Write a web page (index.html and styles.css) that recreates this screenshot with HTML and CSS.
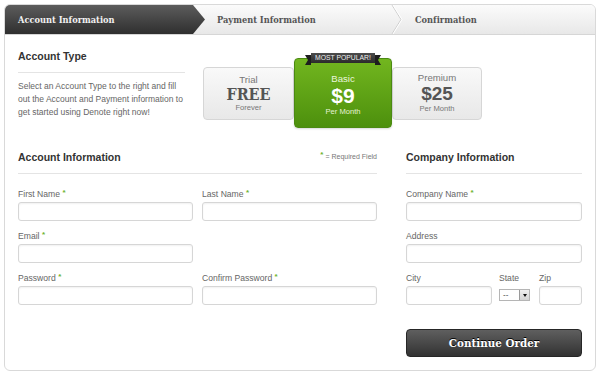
FILE: index.html
```html
<!DOCTYPE html>
<html lang="en">
<head>
    <meta charset="UTF-8">
    <meta name="viewport" content="width=device-width, initial-scale=1.0">
    <title>Sign Up</title>
    <link rel="stylesheet" href="styles.css">
</head>
<body>
    <div class="signup">
        <div class="steps">
            <div class="step active">Account Information</div>
            <div class="step step-payment">Payment Information</div>
            <svg class="step-sep" width="12" height="29" viewBox="0 0 12 29">
                <polyline points="1,0 10,14.5 1,29" fill="none" stroke="#cdcdcd" stroke-width="1"/>
                <polyline points="2,0 11,14.5 2,29" fill="none" stroke="#ffffff" stroke-width="1"/>
            </svg>
            <div class="step">Confirmation</div>
        </div>

        <div class="signup-body">
            <div class="account-type">
                <div class="account-type-info">
                    <h2 class="section-title">Account Type</h2>
                    <p>Select an Account Type to the right and fill out the Account and Payment information to get started using Denote right now!</p>
                </div>
                <div class="plans">
                    <div class="plan plan-trial">
                        <span class="plan-name">Trial</span>
                        <span class="plan-price slab">FREE</span>
                        <span class="plan-term">Forever</span>
                    </div>
                    <div class="plan plan-basic">
                        <span class="ribbon">MOST POPULAR!</span>
                        <span class="plan-name">Basic</span>
                        <span class="plan-price">$9</span>
                        <span class="plan-term">Per Month</span>
                    </div>
                    <div class="plan plan-premium">
                        <span class="plan-name">Premium</span>
                        <span class="plan-price">$25</span>
                        <span class="plan-term">Per Month</span>
                    </div>
                </div>
            </div>

            <div class="forms">
                <div class="form-account">
                    <div class="section-title section-head">
                        <h2>Account Information</h2>
                        <span class="required-note"><span class="req">*</span> = Required Field</span>
                    </div>
                    <div class="fields">
                        <div class="field-row">
                            <div class="field">
                                <label>First Name <span class="req">*</span></label>
                                <input type="text">
                            </div>
                            <div class="field">
                                <label>Last Name <span class="req">*</span></label>
                                <input type="text">
                            </div>
                        </div>
                        <div class="field-row">
                            <div class="field">
                                <label>Email <span class="req">*</span></label>
                                <input type="text">
                            </div>
                            <div class="field"></div>
                        </div>
                        <div class="field-row">
                            <div class="field">
                                <label>Password <span class="req">*</span></label>
                                <input type="password">
                            </div>
                            <div class="field">
                                <label>Confirm Password <span class="req">*</span></label>
                                <input type="password">
                            </div>
                        </div>
                    </div>
                </div>

                <div class="form-company">
                    <div class="section-title section-head">
                        <h2>Company Information</h2>
                    </div>
                    <div class="fields">
                        <div class="field">
                            <label>Company Name <span class="req">*</span></label>
                            <input type="text">
                        </div>
                        <div class="field">
                            <label>Address</label>
                            <input type="text">
                        </div>
                        <div class="field-row address-row">
                            <div class="field field-city">
                                <label>City</label>
                                <input type="text">
                            </div>
                            <div class="field field-state">
                                <label>State</label>
                                <div class="select">
                                    <span class="select-value">--</span>
                                    <span class="select-arrow"></span>
                                </div>
                            </div>
                            <div class="field field-zip">
                                <label>Zip</label>
                                <input type="text">
                            </div>
                        </div>
                    </div>
                    <button class="continue">Continue Order</button>
                </div>
            </div>
        </div>
    </div>
</body>
</html>
```

FILE: styles.css
```css
body {
    margin: 4px;
    font-family: "Liberation Sans", Arial, sans-serif;
    font-variant-ligatures: none;
    background-color: #fff;
    color: #666;
}

.slab, .step, .continue {
    font-family: "DejaVu Serif Condensed", "DejaVu Serif", serif;
    font-stretch: condensed;
    font-weight: bold;
}

.signup {
    border: 1px solid #d9d9d9;
    border-radius: 6px;
    overflow: hidden;
}

/* steps bar */

.steps {
    display: flex;
    height: 29px;
    background: linear-gradient(#fbfbfb, #e8e8e8);
    border-bottom: 1px solid #d6d6d6;
}

.step {
    flex: 1;
    padding-left: 12px;
    line-height: 29px;
    font-size: 9.2px;
    color: #555;
    white-space: nowrap;
}

.step.active {
    flex: 0 0 200px;
    box-sizing: border-box;
    padding-left: 13px;
    color: #f2f2f2;
    background: linear-gradient(#5c5c5c, #2f2f2f);
    clip-path: polygon(0 0, 188px 0, 100% 50%, 188px 100%, 0 100%);
}

.step-payment {
    flex: 0 0 174px;
}

.step-sep {
    flex: none;
}

/* body */

.signup-body {
    padding: 13px 12px 13px 13px;
}

.section-title {
    margin: 0;
    padding-bottom: 8px;
    border-bottom: 1px solid #e4e4e4;
    font-size: 10.5px;
    line-height: 16px;
    font-weight: bold;
    color: #333;
}

.section-head h2 {
    margin: 0;
    font-size: 10.5px;
}

.account-type {
    display: flex;
    gap: 18px;
}

.account-type-info {
    width: 167px;
}

.account-type-info p {
    margin: 7px 0 0;
    font-size: 8.5px;
    line-height: 13px;
    color: #666;
}

.plans {
    display: flex;
    align-items: center;
    margin-top: 10px;
}

.plan {
    box-sizing: border-box;
    display: flex;
    flex-direction: column;
    align-items: center;
    justify-content: center;
    height: 53px;
    border: 1px solid #d6d6d6;
    border-radius: 4px;
    background: linear-gradient(#f9f9f9, #e8e8e8);
    color: #777;
}

.plan-trial {
    width: 91px;
}

.plan-premium {
    width: 90px;
}

.plan-basic {
    position: relative;
    z-index: 1;
    width: 98px;
    height: 70px;
    padding-top: 3px;
    border-color: #4b8a12;
    background: linear-gradient(#72b61f, #4d900d);
    color: #fff;
    box-shadow: 0 1px 2px rgba(0, 0, 0, 0.15);
}

.plan-name {
    font-size: 9.6px;
    line-height: 12px;
}

.plan-price {
    font-size: 19px;
    line-height: 20px;
    font-weight: bold;
    color: #555;
}

.plan-price.slab {
    font-size: 16px;
    line-height: 17px;
}

.plan-term {
    font-size: 7.6px;
    line-height: 10px;
}

.plan-basic .plan-name {
    color: #eaf5dc;
}

.plan-basic .plan-price {
    font-size: 21px;
    line-height: 22px;
    color: #fff;
}

.plan-basic .plan-term {
    color: #e6f2d6;
}

.ribbon {
    position: absolute;
    top: -6px;
    left: 50%;
    transform: translateX(-50%);
    width: 64px;
    height: 10px;
    line-height: 10px;
    background: linear-gradient(#4c4c4c, #2b2b2b);
    color: #eee;
    font-size: 6.8px;
    text-align: center;
    white-space: nowrap;
}

.ribbon::before, .ribbon::after {
    content: "";
    position: absolute;
    top: 2px;
    border-style: solid;
    border-width: 5px 3px;
    border-color: #1e1e1e;
}

.ribbon::before {
    left: -6px;
    border-left-color: transparent;
}

.ribbon::after {
    right: -6px;
    border-right-color: transparent;
}

/* forms */

.forms {
    display: flex;
    gap: 29px;
    margin-top: 21px;
}

.form-account {
    width: 359px;
}

.form-company {
    width: 176px;
}

.section-head {
    display: flex;
    justify-content: space-between;
    align-items: center;
}

.required-note {
    font-size: 7px;
    font-weight: normal;
    color: #777;
}

.fields {
    margin-top: 13px;
}

.field-row {
    display: flex;
    gap: 9px;
}

.field {
    flex: 1;
    margin-bottom: 8px;
}

label {
    display: block;
    height: 14px;
    margin-bottom: 1px;
    font-size: 8.6px;
    line-height: 14px;
    color: #666;
}

.req {
    color: #6db32f;
    font-weight: bold;
    font-size: 8px;
    line-height: 0;
    vertical-align: 2px;
}

input {
    display: block;
    box-sizing: border-box;
    width: 100%;
    height: 19px;
    margin: 0;
    border: 1px solid #d6d6d6;
    border-radius: 3px;
    box-shadow: inset 0 1px 2px rgba(0, 0, 0, 0.06);
    background: #fff;
}

.address-row {
    gap: 7px;
}

.field-city {
    flex: 0 0 86px;
}

.field-state {
    flex: 0 0 33px;
}

.field-zip {
    flex: 1;
}

.select {
    display: flex;
    box-sizing: border-box;
    width: 31px;
    height: 12px;
    margin-top: 4px;
    border: 1px solid #b5b5b5;
    background: #fff;
}

.select-value {
    flex: 1;
    padding-left: 3px;
    font-size: 8px;
    line-height: 9px;
    color: #333;
}

.select-arrow {
    display: flex;
    align-items: center;
    justify-content: center;
    width: 9px;
    border-left: 1px solid #9a9a9a;
    background: linear-gradient(#f0f0f0, #d4d4d4);
}

.select-arrow::after {
    content: "";
    border-style: solid;
    border-width: 3px 2.5px 0;
    border-color: #111 transparent transparent;
}

.continue {
    display: block;
    width: 100%;
    height: 28px;
    margin-top: 16px;
    padding: 0;
    border: 1px solid #262626;
    border-radius: 4px;
    background: linear-gradient(#5f5f5f, #323232);
    color: #fff;
    font-size: 11.5px;
    text-shadow: 0 -1px 0 #000;
    cursor: pointer;
}
```
